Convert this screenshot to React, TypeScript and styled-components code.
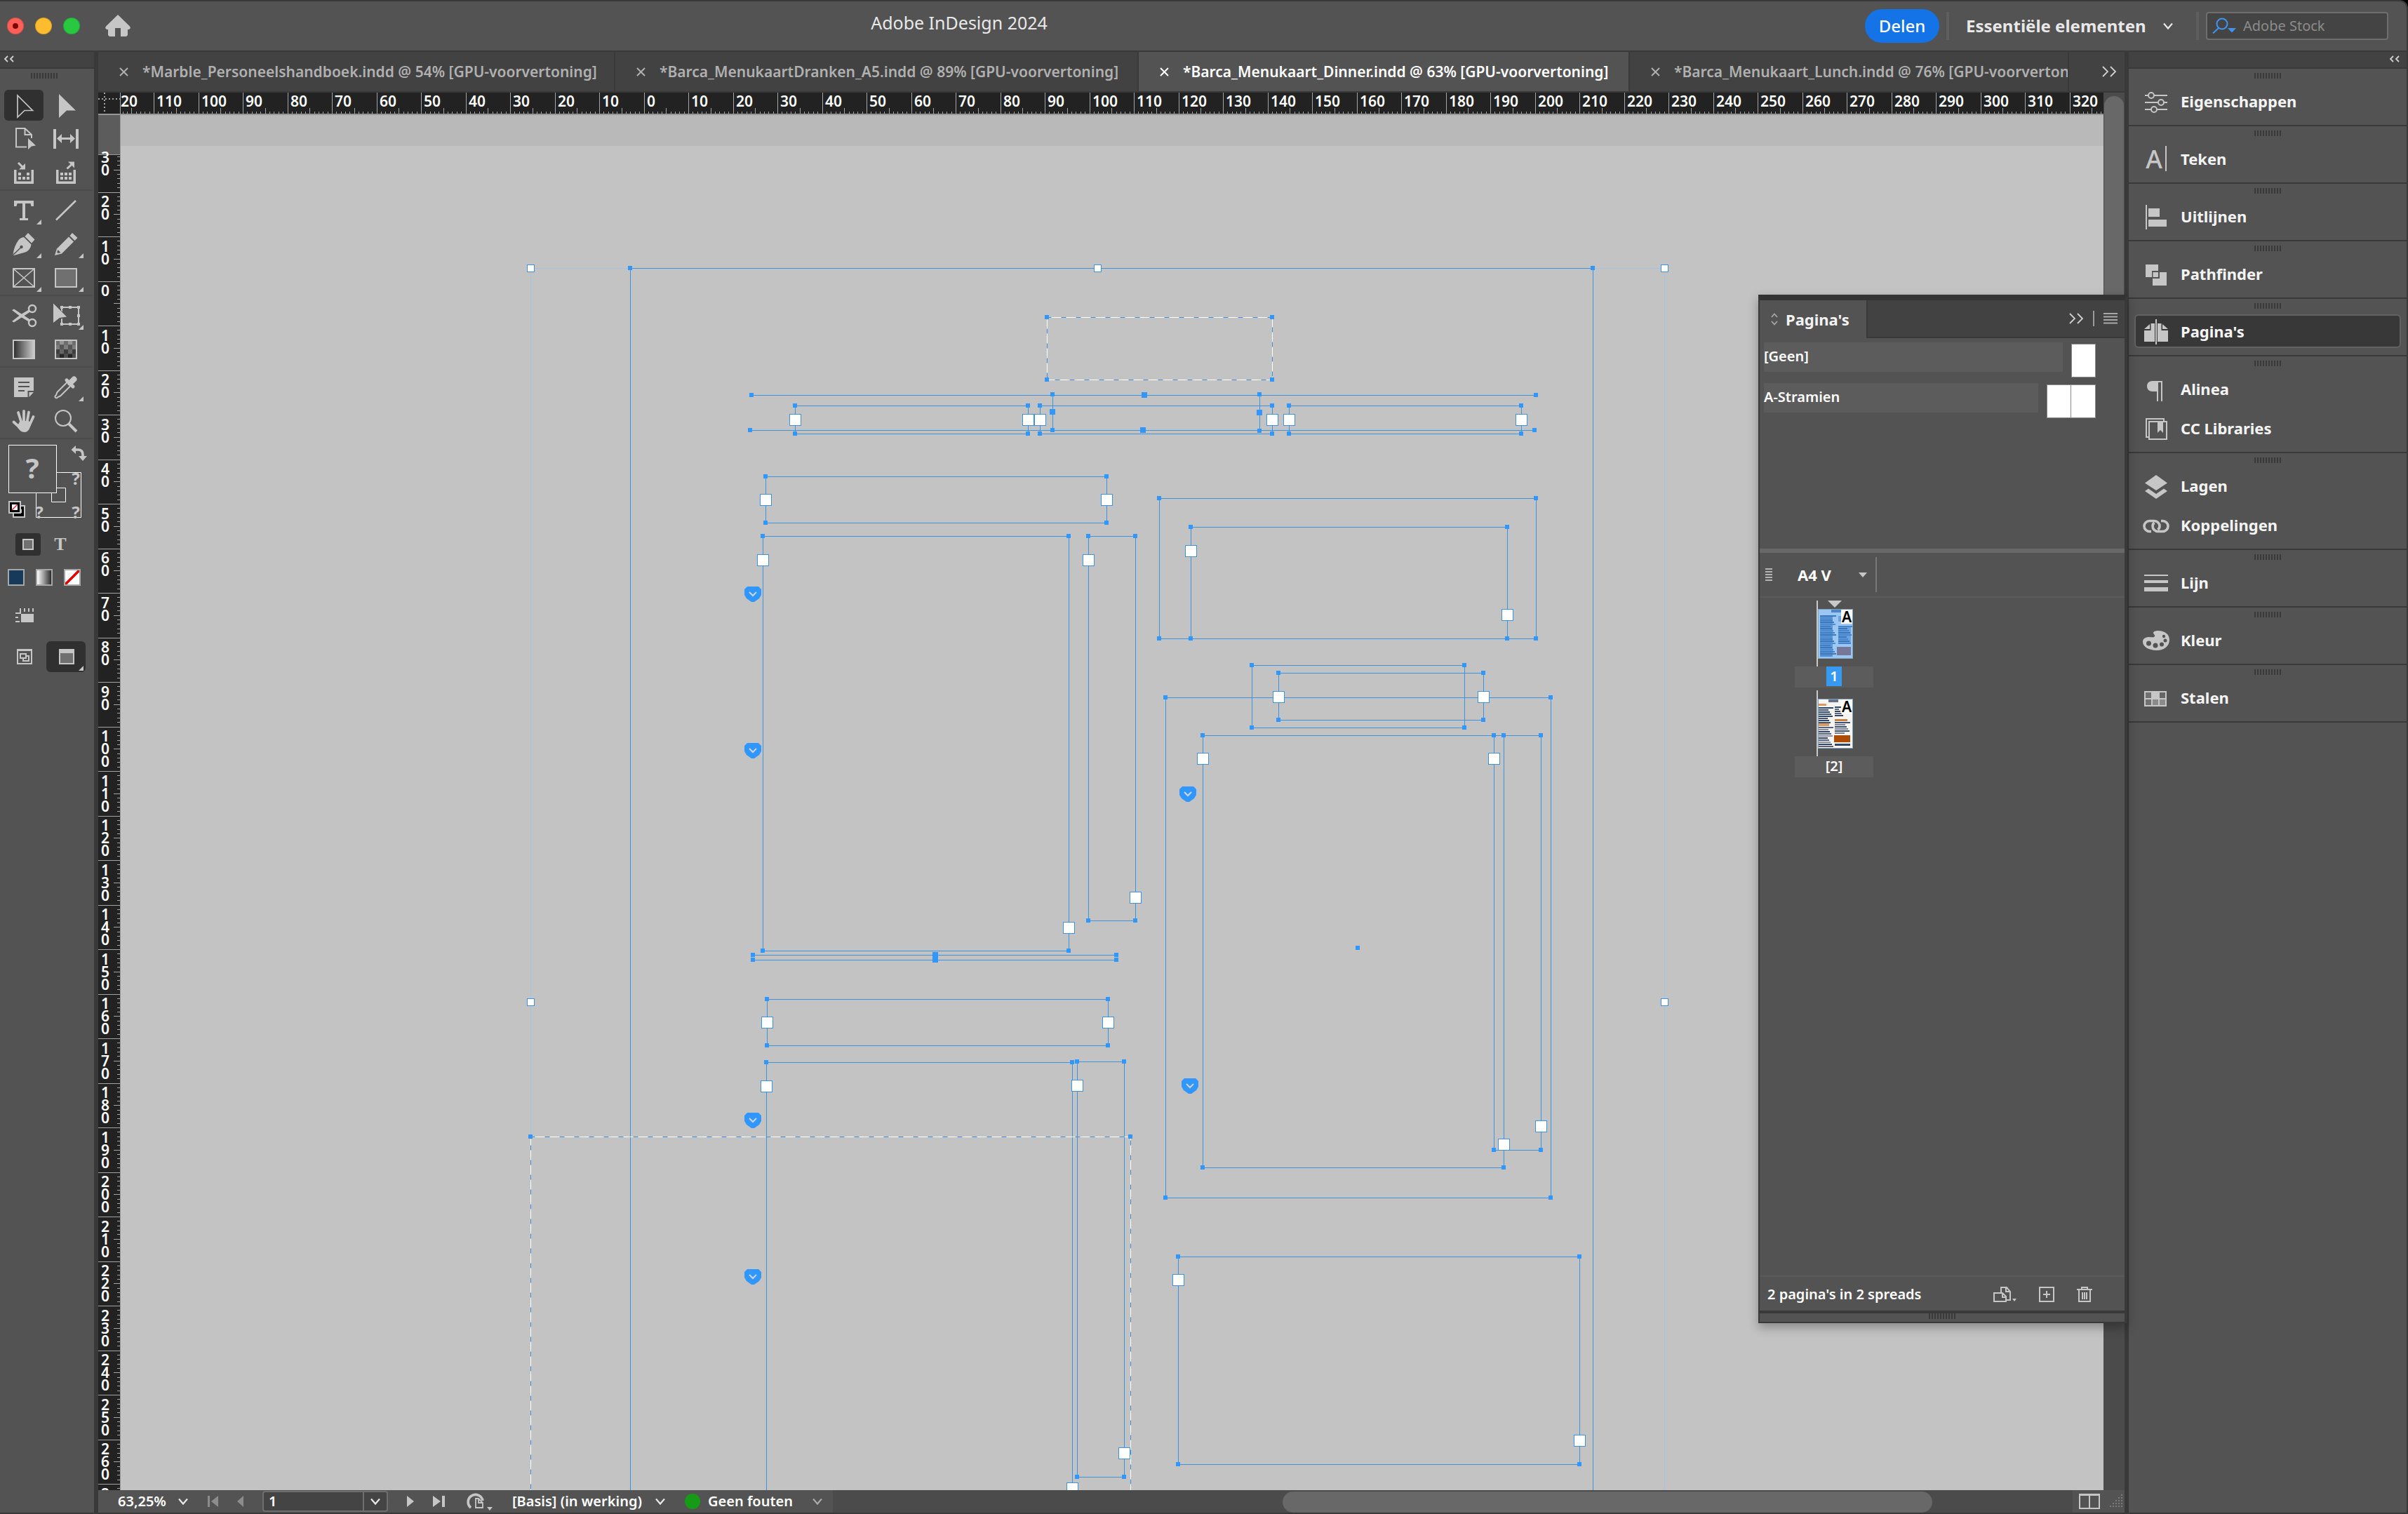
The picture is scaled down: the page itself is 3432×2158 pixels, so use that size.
import React from "react";
import styled, { createGlobalStyle, css } from "styled-components";

/* ---------- theme values ---------- */

const c = {
  base: "#535353",
  dark: "#424242",
  edge: "#393939",
  glyph: "#c6c6c6",
  pressed: "#303030",
  soft: "#5c5c5c",
  blue: "#2f97ff",
  line: "#3f92dd",
  pale: "#a6c3e0",
};

const Global = createGlobalStyle`
  html, body { margin: 0; background: #000; }
  *, *::before, *::after { box-sizing: border-box; }
  body, button, input, select {
    font-family: "Noto Sans", "Open Sans", sans-serif;
    font-size: 20px;
    line-height: 28px;
    font-weight: 600;
    color: #fff;
  }
  button, select { background: none; border: 0; padding: 0; margin: 0; cursor: pointer; }
  svg { display: block; flex: none; }
`;

/* ---------- shell ---------- */

const Shell = styled.div`
  display: flex;
  flex-direction: column;
  height: 100vh;
  overflow: hidden;
  background: ${c.base};
  border: solid ${c.edge};
  border-width: 2px 2px 2px 0;
  border-radius: 0 12px 0 0;
`;

const TopBar = styled.header`
  display: flex;
  align-items: center;
  flex: none;
  height: 72px;
  padding: 0 26px 0 10px;
  border-bottom: 2px solid ${c.edge};
`;

const TrafficLights = styled.div`
  display: flex;
  gap: 16px;
  margin-right: 36px;
`;

const Light = styled.button<{ $fill: string }>`
  display: grid;
  place-items: center;
  width: 24px;
  height: 24px;
  border-radius: 50%;
  background: ${(p) => p.$fill};
  box-shadow: inset 0 0 0 1px rgba(0, 0, 0, 0.15);
`;

const LightDot = styled.span`
  width: 8px;
  height: 8px;
  border-radius: 50%;
  background: #7d0603;
`;

const Title = styled.h1`
  flex: 1;
  margin: 0;
  padding: 0 110px 10px 0;
  text-align: center;
  font-size: 25px;
  line-height: 32px;
  font-weight: 400;
  color: #e8e8e8;
`;

const Share = styled.button`
  width: 106px;
  height: 48px;
  border-radius: 24px;
  background: #1473e6;
  font-size: 24px;
  line-height: 32px;
  font-weight: 500;
`;

const BarRule = styled.span`
  width: 4px;
  height: 40px;
  margin: 0 10px;
  background: #5e5e5e;
`;

const Picker = styled.label<{ $width: number; $size?: number; $weight?: number }>`
  display: flex;
  align-items: center;
  justify-content: space-between;
  width: ${(p) => p.$width}px;
  select {
    appearance: none;
    flex: 1;
    min-width: 0;
    outline: 0;
    font-size: ${(p) => p.$size ?? 20}px;
    font-weight: ${(p) => p.$weight ?? 600};
    line-height: 32px;
  }
  svg { margin-left: -40px; pointer-events: none; }
`;

const WorkspaceSlot = styled.div`
  padding: 0 22px 0 14px;
  color: #e8e8e8;
  select { color: inherit; }
`;

const SearchBox = styled.label`
  display: flex;
  align-items: center;
  gap: 10px;
  width: 260px;
  height: 40px;
  padding: 0 7px;
  border: 2px solid #6e6e6e;
  border-radius: 4px;
  background: #444;
  input {
    flex: 1;
    min-width: 0;
    padding: 0;
    border: 0;
    outline: 0;
    background: none;
    font-size: 20px;
    font-weight: 400;
  }
  input::placeholder { color: #8c8c8c; opacity: 1; }
`;

const Body = styled.div`
  display: flex;
  flex: 1;
  min-height: 0;
`;

/* ---------- shared dock parts ---------- */

const DockHeader = styled.div<{ $end?: boolean }>`
  display: flex;
  align-items: center;
  justify-content: ${(p) => (p.$end ? "flex-end" : "flex-start")};
  height: 24px;
  padding: 0 ${(p) => (p.$end ? 10 : 5)}px 2px;
  background: ${c.dark};
  border-bottom: 2px solid ${c.edge};
`;

const Grip = styled.div`
  width: 38px;
  height: 8px;
  margin: 0 auto;
  background: repeating-linear-gradient(90deg, ${c.edge} 0 2px, transparent 2px 4px);
`;

/* ---------- toolbar ---------- */

const ToolDock = styled.aside`
  flex: none;
  width: 140px;
  border-right: 6px solid ${c.edge};
`;

const ToolGrip = styled.div`
  padding: 6px 8px 14px 0;
`;

const ToolGroup = styled.div`
  display: grid;
  grid-template-columns: 56px 56px;
  gap: 4px;
  padding: 2px 0 2px 6px;
  margin-right: 2px;
  & + & { border-top: 2px solid #4c4c4c; padding-top: 6px; }
`;

const ToolButton = styled.button<{ $on?: boolean }>`
  width: 56px;
  height: 44px;
  border-radius: 6px;
  background: ${(p) => (p.$on ? c.pressed : "none")};
`;

const SwatchPair = styled.button`
  display: block;
  width: 132px;
  border-top: 2px solid #4c4c4c;
`;

const ToolRow = styled.div<{ $left: number; $top: number; $gap: number }>`
  display: flex;
  align-items: center;
  gap: ${(p) => p.$gap}px;
  padding: ${(p) => p.$top}px 0 0 ${(p) => p.$left}px;
`;

const SmallTool = styled.button<{ $on?: boolean }>`
  display: grid;
  place-items: center;
  width: 36px;
  height: 32px;
  border-radius: 4px;
  background: ${(p) => (p.$on ? c.pressed : "none")};
  color: ${c.glyph};
  font: bold 26px/32px "Liberation Serif", serif;
`;

const Chip = styled.button<{ $fill: string }>`
  width: 24px;
  height: 24px;
  border: 2px solid #a6a6a6;
  background: ${(p) => p.$fill};
`;

/* ---------- document ---------- */

const DocumentArea = styled.main`
  position: relative;
  display: flex;
  flex-direction: column;
  flex: 1;
  min-width: 0;
`;

const Tabs = styled.div`
  display: grid;
  grid-template-columns: 737px 746px 700px minmax(0, 1fr) 79px;
  flex: none;
  height: 58px;
  background: ${c.dark};
  border-bottom: 2px solid ${c.edge};
`;

const Tab = styled.div<{ $on?: boolean }>`
  display: flex;
  align-items: center;
  gap: 20px;
  padding: 0 0 0 30px;
  overflow: hidden;
  white-space: nowrap;
  font-size: 21px;
  border-right: 2px solid ${c.edge};
  color: ${(p) => (p.$on ? "#fff" : "#b0b0b0")};
  background: ${(p) => (p.$on ? c.base : "none")};
  button { color: inherit; }
`;

const MoreTabs = styled.button`
  display: flex;
  align-items: center;
  justify-content: flex-end;
  padding-right: 11px;
`;

const Work = styled.div`
  display: grid;
  grid-template: 32px minmax(0, 1fr) 32px / 32px minmax(0, 1fr) 30px;
  flex: 1;
  min-height: 0;
`;

const clip = css`
  overflow: hidden;
  min-width: 0;
  min-height: 0;
`;

const RulerStrip = styled.div`
  ${clip}
  background: #222;
`;

const Pasteboard = styled.div`
  ${clip}
  background: linear-gradient(#b9b9b9 44px, #c3c3c3 44px);
`;

const VerticalScroll = styled.div`
  grid-column: 3;
  grid-row: 1 / 3;
  padding: 5px 1px 0;
  background: #4b4b4b;
`;

const Thumb = styled.div<{ $w: string; $h: string }>`
  width: ${(p) => p.$w};
  height: ${(p) => p.$h};
  border-radius: 15px;
  background: #686868;
`;

const StatusBar = styled.footer`
  grid-column: 1 / 4;
  display: flex;
  min-width: 0;
`;

const StatusItems = styled.div`
  display: flex;
  align-items: center;
  gap: 27px;
  flex: none;
  width: 1047px;
  padding-left: 28px;
`;

const PageField = styled.div`
  display: flex;
  align-items: center;
  width: 179px;
  height: 30px;
  border: 2px solid #6e6e6e;
  border-radius: 4px;
  background: #444;
  input {
    flex: 1;
    min-width: 0;
    padding: 0 0 0 7px;
    border: 0;
    outline: 0;
    background: none;
    line-height: 26px;
  }
  button {
    display: grid;
    place-items: center;
    width: 34px;
    height: 26px;
    border-left: 2px solid #6e6e6e;
  }
`;

const Preflight = styled.div`
  display: flex;
  align-items: center;
  gap: 11px;
`;

const OkDot = styled.span`
  width: 22px;
  height: 22px;
  border-radius: 50%;
  background: #159b15;
`;

const HorizontalScroll = styled.div`
  flex: 1;
  display: flex;
  justify-content: flex-end;
  padding: 2px 200px 0 0;
  background: #4b4b4b;
`;

const SplitCorner = styled.div`
  display: flex;
  align-items: center;
  gap: 12px;
  width: 74px;
  padding: 0 0 0 9px;
`;

/* ---------- floating pages panel ---------- */

const PagesPanel = styled.section`
  position: absolute;
  z-index: 2;
  top: 346px;
  right: -4px;
  display: flex;
  flex-direction: column;
  width: 526px;
  height: 1466px;
  background: ${c.base};
  border: 2px solid ${c.edge};
  border-right-width: 4px;
  border-top: 8px solid #333;
  box-shadow: 0 6px 14px rgba(0, 0, 0, 0.3);
`;

const PanelTabs = styled.div`
  display: flex;
  height: 54px;
  background: ${c.dark};
`;

const PanelTab = styled.div`
  display: flex;
  align-items: center;
  gap: 11px;
  width: 154px;
  padding-left: 16px;
  border-right: 2px solid ${c.edge};
  background: ${c.base};
  font-size: 22px;
  font-weight: 700;
  h2 { margin: 0; font: inherit; color: #f2f2f2; }
`;

const PanelTabTools = styled.div`
  flex: 1;
  display: flex;
  align-items: center;
  justify-content: flex-end;
  gap: 13px;
  padding-right: 10px;
  border-bottom: 2px solid ${c.edge};
`;

const ThinRule = styled.span<{ $h: number; $dim?: boolean }>`
  width: 2px;
  height: ${(p) => p.$h}px;
  background: ${(p) => (p.$dim ? "#787878" : "#9a9a9a")};
`;

const MasterList = styled.div`
  display: flex;
  flex-direction: column;
  gap: 8px;
  height: 300px;
  padding: 6px 41px 0 6px;
`;

const MasterRow = styled.div`
  display: flex;
  align-items: flex-end;
  gap: 12px;
  height: 50px;
`;

const MasterName = styled.div`
  flex: 1;
  align-self: flex-start;
  height: 42px;
  line-height: 40px;
  background: ${c.soft};
`;

const MasterPages = styled.div`
  display: flex;
  height: 48px;
  border: 1px solid #8a8a8a;
  background: #fff;
`;

const MasterSheet = styled.span`
  width: 33px;
  & + & { width: 35px; border-left: 1px solid #8a8a8a; }
`;

const SizeBar = styled.div`
  display: flex;
  align-items: center;
  height: 70px;
  padding-left: 8px;
  border-top: 6px solid #686868;
  border-bottom: 2px solid #5a5a5a;
`;

const SizeSlot = styled.div`
  padding: 0 12px 0 36px;
`;

const Spreads = styled.div`
  flex: 1;
  padding: 4px 0 0 50px;
`;

const Spread = styled.figure`
  width: 112px;
  margin: 0 0 4px;
  svg { margin-left: 30px; }
`;

const SpreadLabel = styled.figcaption`
  display: flex;
  justify-content: center;
  height: 30px;
  margin: 0;
  background: ${c.soft};
  line-height: 28px;
`;

const PageBadge = styled.span`
  width: 22px;
  height: 28px;
  background: #3699f2;
  text-align: center;
`;

const PanelFooter = styled.div`
  display: flex;
  align-items: center;
  gap: 32px;
  height: 50px;
  padding: 2px 46px 0 11px;
  border-top: 2px solid #5a5a5a;
  span { flex: 1; }
`;

const PanelGrip = styled.div`
  height: 16px;
  border-top: 4px solid ${c.edge};
`;

/* ---------- right dock ---------- */

const RightDock = styled.aside`
  position: relative;
  z-index: 1;
  flex: none;
  width: 402px;
  border-left: 6px solid ${c.edge};
`;

const DockSection = styled.section`
  display: flex;
  flex-direction: column;
  gap: 8px;
  padding: 6px 8px 10px;
  border-bottom: 2px solid ${c.edge};
`;

const DockItem = styled.button<{ $on?: boolean }>`
  display: flex;
  align-items: center;
  gap: 16px;
  height: 48px;
  padding-left: 10px;
  border: 2px solid ${(p) => (p.$on ? "#626262" : "transparent")};
  border-radius: 6px;
  background: ${(p) => (p.$on ? "#383838" : "none")};
  color: #f4f4f4;
  font-size: 22px;
  font-weight: 700;
`;

/* ---------- small icons ---------- */

type IconProps = { w: number; h: number; children: React.ReactNode };
const Icon = ({ w, h, children }: IconProps) => (
  <svg width={w} height={h} viewBox={`0 0 ${w} ${h}`} fill="none" aria-hidden="true">
    {children}
  </svg>
);

const Chevron = ({ stroke = "#e8e8e8" }: { stroke?: string }) => (
  <Icon w={16} h={12}>
    <path d="M2 2.5L8 9.5L14 2.5" stroke={stroke} strokeWidth="2.2" />
  </Icon>
);

const DoubleChevron = ({ left, big }: { left?: boolean; big?: boolean }) => {
  const w = big ? 22 : 15;
  const h = big ? 16 : 10;
  const d = left
    ? `M6 1L2 ${h / 2}L6 ${h - 1}M14 1L10 ${h / 2}L14 ${h - 1}`
    : `M2 1L9 ${h / 2}L2 ${h - 1}M13 1L20 ${h / 2}L13 ${h - 1}`;
  return (
    <Icon w={w} h={h}>
      <path d={d} stroke="#d0d0d0" strokeWidth="1.8" />
    </Icon>
  );
};

const Cross = () => (
  <Icon w={13} h={13}>
    <path d="M1 1L12 12M12 1L1 12" stroke="currentColor" strokeWidth="2" />
  </Icon>
);

/* ---------- tool glyphs, drawn on a 56 x 44 field ---------- */

const G = c.glyph;
const More = () => <path d="M46 42L53 35V42Z" fill={G} />;

const checker: React.ReactNode[] = [];
for (let r = 0; r < 4; r++)
  for (let k = 0; k < 5; k++) {
    const shade = (r + k) % 2 ? 150 - r * 24 : 110 - r * 24;
    checker.push(
      <rect key={`${r}-${k}`} x={13 + k * 6} y={9 + r * 6.5} width="6" height="6.5" fill={`rgb(${shade},${shade},${shade})`} />
    );
  }

type Tool = { name: string; on?: boolean; art: React.ReactNode };

const toolGroups: Tool[][] = [
  [
    { name: "Selectie", on: true, art: <path d="M19 8L40.5 29.5H29L19 39Z" stroke={G} strokeWidth="1.7" /> },
    { name: "Direct selecteren", art: <path d="M18 6L42 29.5H29L18 40Z" fill={G} /> },
    {
      name: "Pagina",
      art: (
        <>
          <path d="M32 33.5H17V7H29.5L39 16V21M29.5 7V16H39" stroke={G} strokeWidth="2" />
          <path d="M34 21L45 31.5L39 32.5L34 37Z" fill={G} />
        </>
      ),
    },
    {
      name: "Tussenruimte",
      art: (
        <>
          <path d="M10 8H14V36H10ZM42 8H46V36H42Z" fill={G} />
          <path d="M15 21.5L22 15V20H34V15L41 21.5L34 28V23H22V28Z" fill={G} />
        </>
      ),
    },
    {
      name: "Inhoud verzamelen",
      art: (
        <>
          <path d="M14 18H17.5V34.5H38.5V18H42V38H14Z" fill={G} />
          <path d="M20 22h4v4h-4zM32 22h4v4h-4zM20 28h4v4h-4zM26 28h4v4h-4zM32 28h4v4h-4z" fill={G} />
          <path d="M20 8L27 15" stroke={G} strokeWidth="3" />
          <path d="M21 17.5H30V9Z" fill={G} />
        </>
      ),
    },
    {
      name: "Inhoud plaatsen",
      art: (
        <>
          <path d="M14 18H17.5V34.5H38.5V18H42V38H14Z" fill={G} />
          <path d="M20 22h4v4h-4zM26 22h4v4h-4zM32 22h4v4h-4zM20 28h4v4h-4zM26 28h4v4h-4zM32 28h4v4h-4z" fill={G} />
          <path d="M29.5 16.5L37 9.5" stroke={G} strokeWidth="3" />
          <path d="M31 6.5H40V15.5Z" fill={G} />
        </>
      ),
    },
  ],
  [
    {
      name: "Tekst",
      art: (
        <>
          <path d="M14 8H42V16H38.5L37.5 12H30V33H34V36H22V33H26V12H18.500L17.500 16H14Z" fill={G} />
          <More />
        </>
      ),
    },
    { name: "Lijn", art: <path d="M14 35.500L42 8" stroke={G} strokeWidth="2.6" /> },
    {
      name: "Pen",
      art: (
        <>
          <path d="M34 6L43.500 15.500L39 20.500L29.500 11Z" fill={G} />
          <path d="M28 12L38.500 22.500C37.500 28 35 31.500 30 33.500L14 38L12.500 37C13.500 29 16 22 20.500 16C22.500 13.500 25 12.500 28 12Z" fill={G} />
          <path d="M13 37L23.500 27" stroke={c.base} strokeWidth="1.6" />
          <circle cx="24.500" cy="26" r="2.200" fill={c.base} />
          <More />
        </>
      ),
    },
    {
      name: "Potlood",
      art: (
        <>
          <path d="M37 6L44.500 13L40.500 17L33.500 10Z" fill={G} />
          <path d="M32 11.500L39 18.500L22 35.500L12 38L15 28.500Z" fill={G} />
          <path d="M16.500 30L20.500 34L16.500 35L15.200 33.800Z" fill={c.base} />
          <More />
        </>
      ),
    },
    {
      name: "Rechthoekig kader",
      art: (
        <>
          <rect x="13" y="9" width="30" height="26" stroke={G} strokeWidth="2" />
          <path d="M13 9L43 35M43 9L13 35" stroke={G} strokeWidth="1.600" />
          <More />
        </>
      ),
    },
    {
      name: "Rechthoek",
      art: (
        <>
          <rect x="13" y="9" width="30" height="26" fill="#707070" stroke={G} strokeWidth="2" />
          <More />
        </>
      ),
    },
  ],
  [
    {
      name: "Schaar",
      art: (
        <>
          <circle cx="40" cy="12" r="5" stroke={G} strokeWidth="2.400" />
          <circle cx="40" cy="32" r="5" stroke={G} strokeWidth="2.400" />
          <path d="M11 14L14 12.500L37 27.500L35 30.500L24 24Z" fill={G} />
          <path d="M11 30L14 31.500L37 16.500L35 13.500L24 20Z" fill={G} />
        </>
      ),
    },
    {
      name: "Vrije transformatie",
      art: (
        <>
          <path d="M22 10H46V34H22Z" stroke={G} strokeWidth="2" />
          <path d="M20 8h4v4h-4zM32 8h4v4h-4zM44 8h4v4h-4zM44 20h4v4h-4zM44 32h4v4h-4zM32 32h4v4h-4zM20 32h4v4h-4z" fill={G} />
          <path d="M9 2L31 25L19.500 26.500L9 35Z" fill={c.base} />
          <path d="M10 4.500L29 23.500L19 25L10 32Z" fill={G} />
          <More />
        </>
      ),
    },
    {
      name: "Verloopstaal",
      art: (
        <>
          <defs>
            <linearGradient id="tool-fade">
              <stop offset="0" stopColor="#2c2c2c" />
              <stop offset="1" stopColor="#cfcfcf" />
            </linearGradient>
          </defs>
          <rect x="13" y="9" width="30" height="26" fill="url(#tool-fade)" stroke={G} strokeWidth="2" />
        </>
      ),
    },
    {
      name: "Verloopdoezelaar",
      art: (
        <>
          {checker}
          <rect x="13" y="9" width="30" height="26" stroke={G} strokeWidth="2" />
        </>
      ),
    },
  ],
  [
    {
      name: "Notitie",
      art: (
        <>
          <path d="M14 8H42V27H33.500V36H14Z" fill={G} />
          <path d="M35.500 36V29H42Z" fill={G} />
          <path d="M20 15H36M20 21H36M20 27H29" stroke={c.base} strokeWidth="2" />
        </>
      ),
    },
    {
      name: "Pipet",
      art: (
        <>
          <path d="M39.500 10.500L34 16" stroke={G} strokeWidth="8" strokeLinecap="round" />
          <path d="M29 12L38 21" stroke={G} strokeWidth="5" strokeLinecap="round" />
          <path d="M29.500 15L16 28.500C14.500 30 15 31.500 14 33C13 34 12 34.500 12.500 36C13 37.500 15 37.800 16 36.500C17 35 19 35.500 20.500 34L34.500 20" stroke={G} strokeWidth="2" />
          <More />
        </>
      ),
    },
    {
      name: "Handje",
      art: (
        <>
          <path d="M20 10L24.500 24M28 8V24M35 9.500L32.500 24M41.500 16L36 28M13.500 23.500L24 33" stroke={G} strokeWidth="3.800" strokeLinecap="round" />
          <path d="M22.500 22H35L38 26C37 32 34.500 38 29 38C24 38 21 34.500 18.500 30Z" fill={G} />
        </>
      ),
    },
    {
      name: "Zoomen",
      art: (
        <>
          <circle cx="24" cy="18" r="11" stroke={G} strokeWidth="2" />
          <path d="M32 26L43 37" stroke={G} strokeWidth="4" />
        </>
      ),
    },
  ],
];

const FillStroke = () => (
  <svg width="132" height="124" viewBox="0 628 132 124" fill="none" aria-hidden="true">
    <path d="M51.500 675.500H115.500V739.500H51.500Z" stroke="#fff" />
    <path d="M73.500 697.500H93.500V717.500H73.500Z" stroke="#fff" />
    <rect x="12.500" y="636.500" width="68" height="68" fill={c.base} stroke="#fff" />
    <g fill={G} fontFamily="Noto Sans, sans-serif" fontWeight="700" textAnchor="middle">
      <text x="46" y="684" fontSize="40">?</text>
      <text x="108" y="693" fontSize="24">?</text>
      <text x="56" y="741" fontSize="24">?</text>
      <text x="108" y="741" fontSize="24">?</text>
    </g>
    <path d="M107 643H111C116 643 118 646 118 650V653" stroke={G} strokeWidth="3.600" />
    <path d="M108 637V649L101.500 643ZM112 652H124L118 659Z" fill={G} />
    <g transform="translate(0 1)">
      <rect x="18" y="721" width="18" height="18" fill="#c6c6c6" />
      <rect x="20" y="723" width="14" height="14" fill="#000" />
      <path d="M30 727V731H26" stroke="#c6c6c6" strokeWidth="2" />
      <rect x="12" y="715" width="18" height="18" fill="#c6c6c6" />
      <rect x="14" y="717" width="14" height="14" fill="#000" />
      <rect x="17" y="720" width="8" height="8" fill="#fff" />
      <path d="M17 728L25 720" stroke="#e3262b" strokeWidth="1.500" />
    </g>
  </svg>
);

/* ---------- dock glyphs, drawn on a 38 x 38 field ---------- */

type Panel = { name: string; on?: boolean; art: React.ReactNode };

const dockSections: Panel[][] = [
  [
    {
      name: "Eigenschappen",
      art: (
        <>
          <path d="M3 11H35M3 21H35M3 31H35" stroke={G} strokeWidth="2" />
          <g fill={c.base} stroke={G} strokeWidth="2">
            <circle cx="12" cy="11" r="4" />
            <circle cx="26" cy="21" r="4" />
            <circle cx="16" cy="31" r="4" />
          </g>
        </>
      ),
    },
  ],
  [
    {
      name: "Teken",
      art: (
        <>
          <text x="16" y="33" textAnchor="middle" fontSize="36" fontWeight="500" fontFamily="Noto Sans, sans-serif" fill={G}>A</text>
          <path d="M33 1V37" stroke={G} strokeWidth="2" />
        </>
      ),
    },
  ],
  [{ name: "Uitlijnen", art: <path d="M4 3H6V38H4ZM8 8H24V20H8ZM8 24H34V34H8Z" fill={G} /> }],
  [
    {
      name: "Pathfinder",
      art: (
        <>
          <path d="M4 6H22V15H13V24H4ZM24 17H34V36H14V26H24Z" fill={G} />
          <path d="M14.500 17H22V24H14.500Z" fill={G} />
        </>
      ),
    },
  ],
  [
    {
      name: "Pagina's",
      on: true,
      art: (
        <path d="M18 2H20V39H18ZM2 18H11.500V8H17V34H2ZM2 16L10 9V16ZM36 18H26.500V8H21V34H36ZM36 16L28 9V16Z" fill={G} />
      ),
    },
  ],
  [
    {
      name: "Alinea",
      art: <path d="M28 8H14C9 8 6 11 6 15.500C6 20 9 23 14 23H20V37H22V10H26V37H28Z" fill={G} />,
    },
    {
      name: "CC Libraries",
      art: (
        <>
          <path d="M8 32H5V6H30V9" stroke={G} strokeWidth="2" />
          <path d="M9 10H34V35H9Z" stroke={G} strokeWidth="2" />
          <path d="M21 10H29V26L25 22L21 26Z" fill={G} />
        </>
      ),
    },
  ],
  [
    {
      name: "Lagen",
      art: <path d="M19 4L35 15.500L19 26L3 15.500ZM3 27L8 23.500L19 31L30 23.500L35 27L19 38Z" fill={G} />,
    },
    {
      name: "Koppelingen",
      art: (
        <g stroke={G} strokeWidth="3.600">
          <path d="M12 28.500H9.500A7.500 7.500 0 0 1 9.500 13.500H16.500A7.500 7.500 0 0 1 24 21C24 23 23.500 24.500 21.500 26" />
          <path d="M26 13.500H28.500A7.500 7.500 0 0 1 28.500 28.500H21.500A7.500 7.500 0 0 1 14 21C14 19 14.500 17.500 16.500 16" />
        </g>
      ),
    },
  ],
  [{ name: "Lijn", art: <path d="M2 8H36V10H2ZM2 16H36V20H2ZM2 26H36V32H2Z" fill={G} /> }],
  [
    {
      name: "Kleur",
      art: (
        <>
          <path d="M22 6C31 6 38 11 38 19C38 28 30 34 20 34C9 34 0 29 0 22C0 17 4 15 9 15C13 15 16 16 17 14C18 12 15 11 15 9C15 7 18 6 22 6Z" fill={G} />
          <g fill={c.base}>
            <circle cx="8.500" cy="24" r="3.500" />
            <circle cx="18" cy="27" r="3.500" />
            <circle cx="27" cy="25.500" r="3" />
            <circle cx="32" cy="20" r="2.500" />
            <circle cx="30" cy="14" r="2.200" />
          </g>
        </>
      ),
    },
  ],
  [
    {
      name: "Stalen",
      art: (
        <>
          <path d="M2 10H34V32H2Z" fill={G} />
          <path d="M4 12H12V20H4ZM4 22H12V30H4Z" fill="#707070" />
          <path d="M14 22H22V30H14ZM24 22H32V30H24Z" fill="#8a8a8a" />
          <path d="M24 12H32V20H24Z" fill="#666" />
        </>
      ),
    },
  ],
];

/* ---------- rulers ---------- */

const UNIT = 63.5;
const ZERO_X = 918;
const ZERO_Y = 401;
const ticks = (from: number, to: number) => Array.from({ length: to - from + 1 }, (_, i) => from + i);

const HorizontalRuler = () => (
  <svg width="2826" height="32" viewBox="172 132 2826 32" aria-hidden="true">
    <path
      d={ticks(-120, 330)
        .map((t) => {
          const x = Math.floor(ZERO_X + (t * UNIT) / 10) + 0.5;
          const top = t % 10 === 0 ? 132 : t % 5 === 0 ? 154 : 159;
          return `M${x} ${top}V162`;
        })
        .join("")}
      stroke="#a4a4a4"
    />
    <rect x="172" y="162" width="2826" height="2" fill="#979797" />
    <g fill="#fff" fontSize="21" fontWeight="600" fontFamily="Noto Sans, sans-serif">
      {ticks(-12, 32).map((t) => (
        <text key={t} x={Math.floor(ZERO_X + t * UNIT) + 4} y="152">
          {Math.abs(t * 10)}
        </text>
      ))}
    </g>
  </svg>
);

const VerticalRuler = () => (
  <svg width="32" height="1960" viewBox="140 164 32 1960" aria-hidden="true">
    <path
      d={ticks(-28, 272)
        .map((t) => {
          const y = Math.floor(ZERO_Y + (t * UNIT) / 10) + 0.5;
          const left = t % 10 === 0 ? 140 : t % 5 === 0 ? 162 : 167;
          return `M${left} ${y}H171`;
        })
        .join("")}
      stroke="#a4a4a4"
    />
    <rect x="140" y="164" width="32" height="56" fill="#5c5c5c" />
    <path d="M140 220.500H171M171.500 164V2124" stroke="#979797" />
    <g fill="#fff" fontSize="21" fontWeight="600" textAnchor="middle" fontFamily="Noto Sans, sans-serif">
      {ticks(-3, 27).map((t) =>
        String(Math.abs(t * 10))
          .split("")
          .map((d, i) => (
            <text key={`${t}-${i}`} x="150" y={Math.round(ZERO_Y + t * UNIT) + 21 + i * 18}>
              {d}
            </text>
          ))
      )}
    </g>
  </svg>
);

/* ---------- artboard frames ---------- */

type Pt = [number, number];
type Frame = { box: [number, number, number, number]; ports?: Pt[]; dashed?: boolean };

const frames: Frame[] = [
  { box: [1492, 452, 1813, 541], dashed: true },
  { box: [1133, 578, 1465, 618], ports: [[1133, 598], [1465, 598]] },
  { box: [1482, 578, 1813, 618], ports: [[1482, 598], [1813, 598]] },
  { box: [1837, 578, 2168, 618], ports: [[1837, 598], [2168, 598]] },
  { box: [1091, 679, 1577, 745], ports: [[1091, 712], [1577, 712]] },
  { box: [1087, 764, 1523, 1355], ports: [[1087, 798], [1523, 1322]] },
  { box: [1551, 764, 1618, 1312], ports: [[1551, 798], [1618, 1279]] },
  { box: [1652, 710, 2189, 910] },
  { box: [1697, 751, 2148, 910], ports: [[1697, 785], [2148, 876]] },
  { box: [1093, 1424, 1579, 1490], ports: [[1093, 1457], [1579, 1457]] },
  { box: [1092, 1514, 1528, 2150], ports: [[1092, 1548], [1528, 2121]] },
  { box: [1535, 1513, 1602, 2105], ports: [[1535, 1547], [1602, 2071]] },
  { box: [756, 1620, 1611, 2160], dashed: true },
  { box: [1784, 948, 2087, 1037] },
  { box: [1661, 994, 2210, 1707] },
  { box: [1822, 959, 2114, 1026], ports: [[1822, 993], [2114, 993]] },
  { box: [2129, 1048, 2196, 1639], ports: [[2129, 1081], [2196, 1605]] },
  { box: [1714, 1048, 2143, 1664], ports: [[1714, 1081], [2143, 1631]] },
  { box: [1679, 1791, 2251, 2087], ports: [[1679, 1824], [2251, 2053]] },
];

const rules: Pt[][] = [
  [[1071, 563], [1631, 563], [2189, 563]],
  [[1069, 613], [1629, 613], [2187, 613]],
  [[1500, 562], [1500, 587], [1500, 613]],
  [[1795, 562], [1795, 588], [1795, 614]],
  [[1073, 1361], [1333, 1361], [1591, 1361]],
  [[1073, 1368], [1333, 1368], [1591, 1368]],
];

const anchors: Pt[] = [[1073, 847], [1073, 1070], [1073, 1597], [1073, 1820], [1693, 1132], [1696, 1548]];
const handles: Pt[] = [[756, 382], [1564, 382], [2372, 382], [756, 1428], [2372, 1428]];

const Dot = ({ at, size = 6 }: { at: Pt; size?: number }) => (
  <rect x={at[0] - size / 2} y={at[1] - size / 2} width={size} height={size} fill={c.blue} />
);

const Square = ({ at, size }: { at: Pt; size: number }) => (
  <rect x={at[0] - size / 2 + 0.5} y={at[1] - size / 2 + 0.5} width={size} height={size} fill="#fff" stroke={c.line} />
);

const Artboard = () => (
  <svg width="2826" height="1960" viewBox="172 164 2826 1960" fill="none" role="img" aria-label="Barca_Menukaart_Dinner">
    <path d="M756.500 2124V382.500H2372.500V2124" stroke={c.pale} />
    <path d="M898.500 2124V382.500H2270.500V2124" stroke={c.line} />
    {frames.map(({ box: [x1, y1, x2, y2], dashed }, i) => (
      <g key={i}>
        <rect x={x1 + 0.5} y={y1 + 0.5} width={x2 - x1} height={y2 - y1} stroke={c.line} />
        {dashed && (
          <rect x={x1 + 0.5} y={y1 + 0.5} width={x2 - x1} height={y2 - y1} stroke="#fff" strokeDasharray="14 7" strokeDashoffset="-6" />
        )}
        {([[x1, y1], [x2, y1], [x1, y2], [x2, y2]] as Pt[]).map((p, k) => (
          <Dot key={k} at={p} />
        ))}
      </g>
    ))}
    {rules.map((pts, i) => (
      <g key={i}>
        <path d={`M${pts[0][0]} ${pts[0][1]}L${pts[2][0]} ${pts[2][1]}`} transform="translate(0.5 0.5)" stroke={c.line} />
        {pts.map((p, k) => (
          <Dot key={k} at={p} size={k === 1 ? 8 : 6} />
        ))}
      </g>
    ))}
    <Dot at={[1935, 1351]} />
    <Dot at={[898, 382]} />
    <Dot at={[2270, 382]} />
    {frames.flatMap((f, i) => (f.ports ?? []).map((p, k) => <Square key={`${i}-${k}`} at={p} size={16} />))}
    {handles.map((p, i) => (
      <Square key={i} at={p} size={10} />
    ))}
    {anchors.map(([x, y], i) => (
      <g key={i} transform={`translate(${x} ${y})`}>
        <path d="M-8 -11H8L12 -7V1L9 6L2 11H-2L-9 6L-12 1V-7Z" fill={c.blue} />
        <path d="M-5 -3L0 2L5 -3" stroke="#cfd6de" strokeWidth="2" />
      </g>
    ))}
  </svg>
);

/* ---------- page thumbnails ---------- */

const strips = (x: number, from: number, to: number, width: number, colours: string[]) => {
  const out: React.ReactNode[] = [];
  for (let y = from, i = 0; y < to; y += 3, i++)
    out.push(
      <rect key={`${x}-${y}`} x={x} y={y} width={width - ((i * 7) % 9)} height="2" fill={colours[i % colours.length]} />
    );
  return out;
};

const SpreadThumb = ({ current }: { current?: boolean }) => (
  <svg width="54" height="94" viewBox="0 0 54 94" fill="none" aria-hidden="true">
    <rect x="1" y="0" width="2" height="94" fill="#c9c9c9" />
    {current && <path d="M17 0H37L27 10Z" fill="#c9c9c9" />}
    <rect x="3" y="12" width="50" height="71" fill={current ? "#9cc7f2" : "#f7f5f2"} />
    {current ? (
      <>
        <rect x="22" y="13" width="14" height="4" fill="#4d86c6" />
        <rect x="6" y="21" width="18" height="59" fill="#5b97d6" />
        <rect x="32" y="36" width="18" height="25" fill="#6aa3df" />
        {strips(6, 21, 80, 23, ["#3b78bd", "#4f8ccf", "#447fc2"])}
        {strips(32, 36, 62, 20, ["#4685cb", "#3a75b8"])}
        <rect x="32" y="22" width="6" height="8" fill="#6aa3df" />
        <rect x="30" y="66" width="20" height="12" fill="#76789a" />
      </>
    ) : (
      <>
        <rect x="18" y="13" width="14" height="4" fill="#6a7190" />
        <rect x="3" y="19" width="12" height="3" fill="#d99a66" />
        {strips(3, 24, 46, 22, ["#32466a", "#3d5478"])}
        <rect x="3" y="47" width="16" height="4" fill="#d99a66" />
        {strips(3, 52, 80, 22, ["#55617f", "#8d8ea6", "#32466a"])}
        {strips(27, 23, 38, 13, ["#32466a", "#5a6583"])}
        <rect x="27" y="41" width="18" height="3" fill="#c9813f" />
        {strips(27, 45, 61, 22, ["#3d5478", "#7d8199"])}
        <rect x="26" y="64" width="23" height="10" fill="#ad4c05" />
        <rect x="27" y="76" width="22" height="3" fill="#32466a" />
      </>
    )}
    <rect x="3.500" y="12.500" width="49" height="70" stroke="#7fa3bd" />
    <rect x="36" y="13" width="16" height="20" fill="#fff" />
    <text x="44" y="31" textAnchor="middle" fontSize="21" fontWeight="600" fontFamily="Noto Sans, sans-serif" fill="#000">A</text>
  </svg>
);

const tabs = [
  { name: "*Marble_Personeelshandboek.indd @ 54% [GPU-voorvertoning]" },
  { name: "*Barca_MenukaartDranken_A5.indd @ 89% [GPU-voorvertoning]" },
  { name: "*Barca_Menukaart_Dinner.indd @ 63% [GPU-voorvertoning]", on: true },
  { name: "*Barca_Menukaart_Lunch.indd @ 76% [GPU-voorvertoning]" },
];

export default function App() {
  return (
    <>
      <Global />
      <Shell>
        <TopBar>
          <TrafficLights>
            <Light $fill="#ff5f57" aria-label="Sluiten">
              <LightDot />
            </Light>
            <Light $fill="#febc2e" aria-label="Minimaliseren" />
            <Light $fill="#28c840" aria-label="Vergroten" />
          </TrafficLights>
          <button aria-label="Beginscherm">
            <Icon w={36} h={32}>
              <path d="M18 0L35 16.500L36 19L34 21H32V29L30 31H22V19H14V31H6L4 29V21H2L0 19L1 16.500Z" fill={G} />
            </Icon>
          </button>
          <Title>Adobe InDesign 2024</Title>
          <Share>Delen</Share>
          <BarRule />
          <WorkspaceSlot>
            <Picker $width={296} $size={24} $weight={700}>
              <select aria-label="Werkruimte">
                <option>Essentiële elementen</option>
              </select>
              <Chevron />
            </Picker>
          </WorkspaceSlot>
          <BarRule />
          <SearchBox>
            <Icon w={34} h={24}>
              <circle cx="14" cy="9" r="7.500" stroke="#4094ec" strokeWidth="2" />
              <path d="M9 15L1 22.500" stroke="#4094ec" strokeWidth="2" />
              <path d="M22 15H34L28 21.500Z" fill="#4094ec" />
            </Icon>
            <input placeholder="Adobe Stock" aria-label="Adobe Stock" />
          </SearchBox>
        </TopBar>

        <Body>
          <ToolDock>
            <DockHeader>
              <DoubleChevron left />
            </DockHeader>
            <ToolGrip>
              <Grip />
            </ToolGrip>
            {toolGroups.map((group, i) => (
              <ToolGroup key={i}>
                {group.map((t) => (
                  <ToolButton key={t.name} $on={t.on} aria-label={t.name}>
                    <Icon w={56} h={44}>{t.art}</Icon>
                  </ToolButton>
                ))}
              </ToolGroup>
            ))}
            <SwatchPair aria-label="Vulling en lijn">
              <FillStroke />
            </SwatchPair>
            <ToolRow $left={22} $top={10} $gap={10}>
              <SmallTool $on aria-label="Opmaak werkt op container">
                <Icon w={16} h={16}>
                  <rect x="1" y="1" width="14" height="14" fill="#707070" stroke={G} strokeWidth="2" />
                </Icon>
              </SmallTool>
              <SmallTool>T</SmallTool>
            </ToolRow>
            <ToolRow $left={11} $top={19} $gap={16}>
              <Chip $fill="#173a5b" aria-label="Kleur toepassen" />
              <Chip $fill="linear-gradient(90deg, #fff, #2a2a2a)" aria-label="Verloop toepassen" />
              <Chip $fill="linear-gradient(135deg, #fff 43%, #f00000 43% 57%, #fff 57%)" aria-label="Geen toepassen" />
            </ToolRow>
            <ToolRow $left={22} $top={32} $gap={0}>
              <button aria-label="Weergaveopties">
                <Icon w={26} h={20}>
                  <path d="M8 8H26V20H8Z" fill={G} />
                  <path d="M7 0V7H0M13 0V5M19 0V5M25 0V5M0 13H4M0 19H6" stroke={G} strokeWidth="2" />
                </Icon>
              </button>
            </ToolRow>
            <ToolRow $left={6} $top={27} $gap={4}>
              <ToolButton aria-label="Alternatieve weergave">
                <Icon w={56} h={44}>
                  <path d="M19 12H39V32H19Z" stroke={G} strokeWidth="2" />
                  <path d="M18 11H40V14H18Z" fill={G} />
                  <path d="M23 18H31V24H23ZM27 24V28H35V21H31" stroke={G} strokeWidth="2" />
                </Icon>
              </ToolButton>
              <ToolButton $on aria-label="Schermmodus">
                <Icon w={56} h={44}>
                  <rect x="19" y="12" width="20" height="20" fill="#707070" stroke={G} strokeWidth="2" />
                  <path d="M18 11H40V17H18Z" fill={G} />
                  <path d="M46 42L53 35V42Z" fill={G} />
                </Icon>
              </ToolButton>
            </ToolRow>
          </ToolDock>

          <DocumentArea>
            <Tabs>
              {tabs.map((t) => (
                <Tab key={t.name} $on={t.on}>
                  <button aria-label="Tabblad sluiten">
                    <Cross />
                  </button>
                  {t.name}
                </Tab>
              ))}
              <MoreTabs aria-label="Meer tabbladen">
                <DoubleChevron big />
              </MoreTabs>
            </Tabs>

            <Work>
              <RulerStrip>
                <Icon w={32} h={32}>
                  <path d="M0 9H31M9 0V32" stroke="#a4a4a4" strokeWidth="2" strokeDasharray="2 3" />
                  <path d="M31.500 0V30" stroke="#a4a4a4" />
                  <path d="M0 31H32" stroke="#979797" strokeWidth="2" />
                </Icon>
              </RulerStrip>
              <RulerStrip>
                <HorizontalRuler />
              </RulerStrip>
              <RulerStrip>
                <VerticalRuler />
              </RulerStrip>
              <Pasteboard>
                <Artboard />
              </Pasteboard>
              <VerticalScroll>
                <Thumb $w="28px" $h="900px" />
              </VerticalScroll>
              <StatusBar>
                <StatusItems>
                  <Picker $width={101}>
                    <select aria-label="Zoomniveau">
                      <option>63,25%</option>
                    </select>
                    <Chevron />
                  </Picker>
                  <button aria-label="Eerste pagina">
                    <Icon w={15} h={16}>
                      <path d="M0 0H3V16H0ZM15 0V16L5 8Z" fill="#8c8c8c" />
                    </Icon>
                  </button>
                  <button aria-label="Vorige pagina">
                    <Icon w={9} h={16}>
                      <path d="M9 0V16L0 8Z" fill="#8c8c8c" />
                    </Icon>
                  </button>
                  <PageField>
                    <input defaultValue="1" aria-label="Pagina" />
                    <button aria-label="Pagina kiezen">
                      <Chevron />
                    </button>
                  </PageField>
                  <button aria-label="Volgende pagina">
                    <Icon w={10} h={16}>
                      <path d="M0 0V16L10 8Z" fill={G} />
                    </Icon>
                  </button>
                  <button aria-label="Laatste pagina">
                    <Icon w={17} h={16}>
                      <path d="M0 0V16L11 8ZM13 0H17V16H13Z" fill={G} />
                    </Icon>
                  </button>
                  <button aria-label="Openen">
                    <Icon w={42} h={26}>
                      <path d="M10 22A10.500 10.500 0 1 1 27 12" stroke={G} strokeWidth="3.600" />
                      <path d="M17 9V22H27V15L21 9ZM21 9V15H27" stroke={G} strokeWidth="1.800" />
                      <path d="M33 21H41L37 26Z" fill={G} />
                    </Icon>
                  </button>
                  <Picker $width={219}>
                    <select aria-label="Preflightprofiel">
                      <option>[Basis] (in werking)</option>
                    </select>
                    <Chevron />
                  </Picker>
                  <Preflight>
                    <OkDot />
                    <Picker $width={164}>
                      <select aria-label="Preflightstatus">
                        <option>Geen fouten</option>
                      </select>
                      <Chevron stroke="#a8a8a8" />
                    </Picker>
                  </Preflight>
                </StatusItems>
                <HorizontalScroll>
                  <Thumb $w="926px" $h="30px" />
                </HorizontalScroll>
                <SplitCorner>
                  <button aria-label="Layoutweergave splitsen">
                    <Icon w={30} h={22}>
                      <path d="M1 2H29V21H1ZM15 2V21" stroke={G} strokeWidth="2" />
                      <path d="M0 0H30V2H0Z" fill={G} />
                    </Icon>
                  </button>
                  <Icon w={20} h={20}>
                    <path d="M18 1h2M14 5h6M10 9h10M6 13h14M2 17h18" stroke="#7a7a7a" strokeWidth="2" strokeDasharray="2 2" />
                  </Icon>
                </SplitCorner>
              </StatusBar>
            </Work>

            <PagesPanel>
              <PanelTabs>
                <PanelTab>
                  <Icon w={10} h={18}>
                    <path d="M1 6L5 1.500L9 6M1 12L5 16.500L9 12" stroke="#a8a8a8" strokeWidth="1.800" />
                  </Icon>
                  <h2>Pagina's</h2>
                </PanelTab>
                <PanelTabTools>
                  <button aria-label="Paneel inklappen">
                    <DoubleChevron big />
                  </button>
                  <ThinRule $h={22} />
                  <button aria-label="Paneelmenu">
                    <Icon w={20} h={16}>
                      <path d="M0 1H20M0 5.500H20M0 10H20M0 14.500H20" stroke="#a8a8a8" strokeWidth="2" />
                    </Icon>
                  </button>
                </PanelTabTools>
              </PanelTabs>
              <MasterList>
                <MasterRow>
                  <MasterName>[Geen]</MasterName>
                  <MasterPages>
                    <MasterSheet />
                  </MasterPages>
                </MasterRow>
                <MasterRow>
                  <MasterName>A-Stramien</MasterName>
                  <MasterPages>
                    <MasterSheet />
                    <MasterSheet />
                  </MasterPages>
                </MasterRow>
              </MasterList>
              <SizeBar>
                <Icon w={10} h={18}>
                  <path d="M0 1H10M0 5H10M0 9H10M0 13H10M0 17H10" stroke="#b4b4b4" strokeWidth="2" />
                </Icon>
                <SizeSlot>
                  <Picker $width={99} $size={22} $weight={700}>
                    <select aria-label="Paginaformaat">
                      <option>A4 V</option>
                    </select>
                    <Icon w={12} h={7}>
                      <path d="M0 0H12L6 7Z" fill={G} />
                    </Icon>
                  </Picker>
                </SizeSlot>
                <ThinRule $h={50} $dim />
              </SizeBar>
              <Spreads>
                <Spread>
                  <SpreadThumb current />
                  <SpreadLabel>
                    <PageBadge>1</PageBadge>
                  </SpreadLabel>
                </Spread>
                <Spread>
                  <SpreadThumb />
                  <SpreadLabel>[2]</SpreadLabel>
                </Spread>
              </Spreads>
              <PanelFooter>
                <span>2 pagina's in 2 spreads</span>
                <button aria-label="Paginaformaat bewerken">
                  <Icon w={33} h={24}>
                    <path d="M1 10H13L18 15V22H1ZM11 10V2H19L24 8V20H19M18 2V8H24M13 10V16H18" stroke={G} strokeWidth="2" />
                    <path d="M27 18H33L30 22Z" fill={G} />
                  </Icon>
                </button>
                <button aria-label="Nieuwe pagina">
                  <Icon w={22} h={22}>
                    <path d="M1 1H21V21H1ZM11 6V16M6 11H16" stroke={G} strokeWidth="2" />
                  </Icon>
                </button>
                <button aria-label="Pagina verwijderen">
                  <Icon w={22} h={24}>
                    <path d="M0 5H22M7 5V2H15V5M3 5V22H19V5M8 9V19M11 9V19M14 9V19" stroke={G} strokeWidth="2" />
                  </Icon>
                </button>
              </PanelFooter>
              <PanelGrip>
                <Grip />
              </PanelGrip>
            </PagesPanel>
          </DocumentArea>

          <RightDock>
            <DockHeader $end>
              <DoubleChevron left />
            </DockHeader>
            {dockSections.map((section, i) => (
              <DockSection key={i}>
                <Grip />
                {section.map((p) => (
                  <DockItem key={p.name} $on={p.on}>
                    <Icon w={38} h={38}>{p.art}</Icon>
                    {p.name}
                  </DockItem>
                ))}
              </DockSection>
            ))}
          </RightDock>
        </Body>
      </Shell>
    </>
  );
}
